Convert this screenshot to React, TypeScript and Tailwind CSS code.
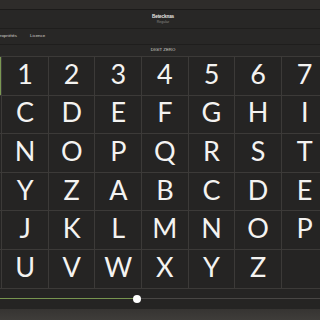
import React from 'react';

const chars: string[] = [
  ...'0123456789'.split(''),
  ...'ABCDEFGHIJKLMNOPQRSTUVWXYZ'.split(''),
  ...'ABCDEFGHIJKLMNOPQRSTUVWXYZ'.split(''),
];

const cells: (string | null)[] = [...chars];
while (cells.length < 66) cells.push(null);

const GlyphCell: React.FC<{ ch: string | null; selected: boolean }> = ({ ch, selected }) => (
  <div
    className={
      'flex items-center justify-center border-r border-b border-[#3c3a38] pb-[5px] text-[27px] font-normal text-[#f4f3f1] leading-none ' +
      (selected ? 'bg-[#7a9853]' : 'bg-[#252423]')
    }
    style={{ fontFamily: 'Lato, "Noto Sans", sans-serif' }}
  >
    {ch}
  </div>
);

export default function App() {
  return (
    <div
      className="flex h-[320px] w-[320px] flex-col overflow-hidden bg-[#252423] text-white"
      style={{ fontFamily: '"Liberation Sans", Arial, sans-serif' }}
    >
      {/* title bar */}
      <div className="h-[9px] shrink-0 bg-[#2e2c2a]" />

      {/* font name */}
      <div className="flex h-[19px] shrink-0 flex-col items-center justify-center border-t border-[#1c1b1a] bg-[#282726] pl-[6px]">
        <div className="text-[4.6px] font-bold leading-[6px] tracking-[-0.1px] text-[#e8e6e3]">Betecknas</div>
        <div className="text-[3.6px] leading-[5px] text-[#8c8985]">Regular</div>
      </div>

      {/* tabs */}
      <div className="flex h-[16px] shrink-0 items-center gap-[13px] border-t border-[#1f1e1d] bg-[#282726] text-[4.4px] text-[#d6d3cf]">
        <span className="ml-[-3px]">Propriétés</span>
        <span>Licence</span>
      </div>

      {/* glyph name */}
      <div className="flex h-[12px] shrink-0 items-center justify-center border-t border-[#1f1e1d] bg-[#282726] pl-[6px] text-[4.3px] text-[#d6d3cf]">
        DIGIT ZERO
      </div>

      {/* glyph grid */}
      <div className="shrink-0 overflow-hidden border-t border-[#3c3a38]">
        <div className="ml-[-44.3px] grid w-max grid-cols-[repeat(11,46.6px)] grid-rows-[repeat(6,38.6px)]">
          {cells.map((ch, i) => (
            <GlyphCell key={i} ch={ch} selected={i === 0} />
          ))}
        </div>
      </div>

      {/* size slider */}
      <div className="relative flex h-[20px] shrink-0 items-center bg-[#252423]">
        <div className="h-[1.5px] w-[137px] bg-[#77944f]" />
        <div className="h-[1.5px] flex-1 bg-[#484644]" />
        <div className="absolute left-[133px] top-[6px] h-[8px] w-[8px] rounded-full bg-white" />
      </div>

      {/* bottom bar */}
      <div className="flex-1 bg-gradient-to-b from-[#363432] to-[#3f3d3a]" />
    </div>
  );
}
